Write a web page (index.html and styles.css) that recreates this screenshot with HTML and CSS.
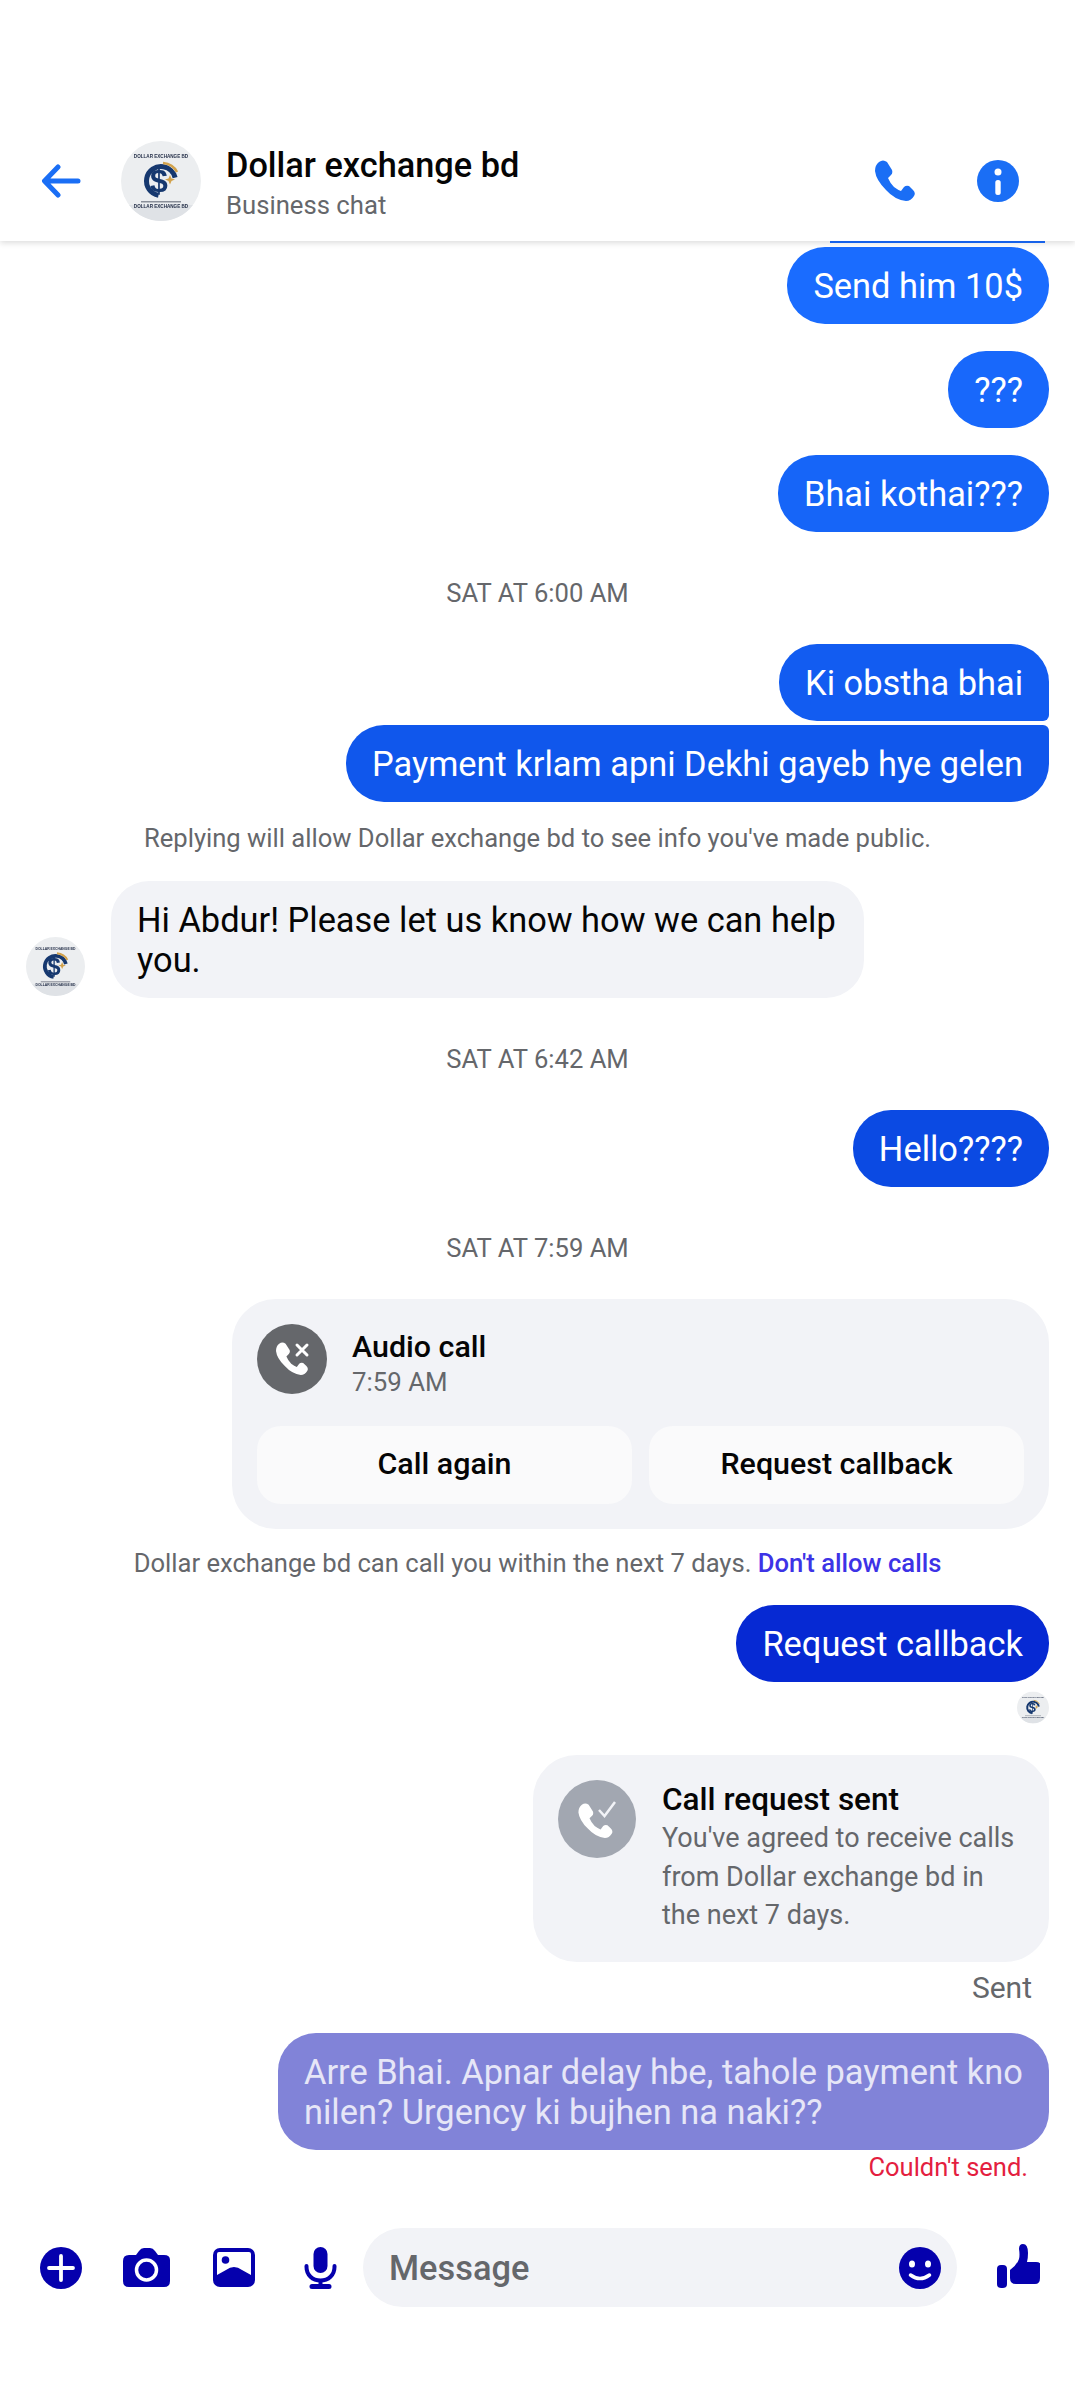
FILE: index.html
```html
<!DOCTYPE html>
<html lang="en">
<head>
  <meta charset="UTF-8" />
  <meta name="viewport" content="width=device-width, initial-scale=1.0"/>
  <title>Dollar exchange bd</title>
  <link rel="stylesheet" href="styles.css">
</head>

<body>
  <!-- shared logo and handset, used by the avatars and call icons -->
  <svg class="defs">
    <symbol id="logo" viewBox="0 0 80 80">
      <circle cx="40" cy="40" r="40" fill="#eceef0"/>
      <path d="M8 64A40 40 0 0 0 72 64Z" fill="#dfe2e6"/>
      <text x="40" y="17" class="logo-name">DOLLAR EXCHANGE BD</text>
      <circle cx="40" cy="40" r="14.500" fill="none" stroke="#16386f" stroke-width="5" stroke-dasharray="62 29" transform="rotate(100 40 40)"/>
      <path d="M42 22q10 1 14 9" fill="none" stroke="#d2a24c" stroke-width="2.500"/>
      <text x="38" y="51" class="logo-sign">$</text>
      <path d="M49 34l1.500 3.500 3.500 1-3.500 1.500-1.500 3.500-1.500-3.500-3.500-1.500 3.500-1z" fill="#d2a24c"/>
      <rect x="20" y="60" width="40" height="1.500" fill="#8a8f99"/>
      <text x="40" y="67" class="logo-name">DOLLAR EXCHANGE BD</text>
    </symbol>
    <symbol id="handset" viewBox="0 0 40 41">
      <path d="M4 2Q8-1 12 2L17 10Q18 13 16 15L13 18Q15 23 19 27Q23 30 26 31L29 27Q31 25 34 26L38 30Q41 33 39 36Q36 41 31 41Q20 40 11 30Q1 20 0 11Q0 5 4 2Z"/>
    </symbol>
  </svg>

  <header class="topbar">
    <svg class="back" viewBox="0 0 40 34"><path d="M37 17H4M17 3L3.500 17 17 31" fill="none" stroke="#1a6ef5" stroke-width="5" stroke-linecap="round" stroke-linejoin="round"/></svg>
    <svg class="avatar-lg" viewBox="0 0 80 80"><use href="#logo"/></svg>
    <div class="title">
      <div class="name">Dollar exchange bd</div>
      <div class="sub">Business chat</div>
    </div>
    <svg class="call-btn" viewBox="0 0 40 41"><use href="#handset"/></svg>
    <svg class="info-btn" viewBox="0 0 42 42"><circle cx="21" cy="21" r="21" fill="#1a6ef5"/><circle cx="21" cy="12" r="3.500" fill="#fff"/><rect x="18.300" y="20" width="5.400" height="15" rx="2.500" fill="#fff"/></svg>
  </header>

  <main class="thread">
    <div class="sliver"></div>
    <div class="bubble b1 after-sliver">Send him 10$</div>
    <div class="bubble b2 gap">???</div>
    <div class="bubble b3 gap">Bhai kothai???</div>

    <div class="stamp">SAT AT 6:00 AM</div>
    <div class="bubble b4 after-stamp first-of-run">Ki obstha bhai</div>
    <div class="bubble b5 last-of-run">Payment krlam apni Dekhi gayeb hye gelen</div>
    <div class="notice">Replying will allow Dollar exchange bd to see info you've made public.</div>

    <div class="their-row">
      <svg class="avatar-sm" viewBox="0 0 80 80"><use href="#logo"/></svg>
      <div class="bubble theirs">Hi Abdur! Please let us know how we can help you.</div>
    </div>

    <div class="stamp">SAT AT 6:42 AM</div>
    <div class="bubble b6 after-stamp">Hello????</div>

    <div class="stamp">SAT AT 7:59 AM</div>
    <div class="call-card after-stamp">
      <div class="call-head">
        <div class="call-icon">
          <svg viewBox="0 0 70 70"><use href="#handset" x="19" y="18" width="32" height="33" class="handset-white"/><path d="M40 21l10 10M50 21L40 31" stroke="#fff" stroke-width="3" stroke-linecap="round"/></svg>
        </div>
        <div>
          <div class="call-title">Audio call</div>
          <div class="call-time">7:59 AM</div>
        </div>
      </div>
      <div class="call-actions">
        <div class="call-action">Call again</div>
        <div class="call-action">Request callback</div>
      </div>
    </div>
    <div class="notice after-card">Dollar exchange bd can call you within the next 7 days. <span class="notice-link">Don't allow calls</span></div>

    <div class="bubble b7 after-notice">Request callback</div>
    <svg class="seen" viewBox="0 0 80 80"><use href="#logo"/></svg>

    <div class="request-card">
      <div class="request-icon">
        <svg viewBox="0 0 78 78"><use href="#handset" x="20" y="23" width="35" height="35" class="handset-white"/><path d="M41 30l5.500 6L57 22" fill="none" stroke="#f2f3f7" stroke-width="2.500"/></svg>
      </div>
      <div class="request-text">
        <div class="request-title">Call request sent</div>
        <div class="request-body">You've agreed to receive calls from Dollar exchange bd in the next 7 days.</div>
      </div>
    </div>
    <div class="sent">Sent</div>

    <div class="bubble failed">Arre Bhai. Apnar delay hbe, tahole payment kno nilen? Urgency ki bujhen na naki??</div>
    <div class="fail-note">Couldn't send.</div>
  </main>

  <footer class="composer">
    <svg class="ic-plus" viewBox="0 0 42 42"><circle cx="21" cy="21" r="21" fill="#0500ad"/><path d="M21 9v24M9 21h24" stroke="#fff" stroke-width="3.800" stroke-linecap="round"/></svg>
    <svg class="ic-camera" viewBox="0 0 47 39"><path d="M6 7h7l3-4q2-3 5-3h6q3 0 5 3l3 4h6q6 0 6 5v21q0 6-6 6H6q-6 0-6-6V13q0-6 6-6z" fill="#0500ad"/><circle cx="23.500" cy="22" r="10" fill="none" stroke="#fff" stroke-width="3.500"/></svg>
    <svg class="ic-photo" viewBox="0 0 42 39"><rect width="42" height="39" rx="7" fill="#0500ad"/><path d="M6 4h30q2 0 2 2v21l-9-5Q21 16 13 22l-9 5V6q0-2 2-2z" fill="#fff"/><circle cx="12.500" cy="12" r="3.800" fill="#0500ad"/></svg>
    <svg class="ic-mic" viewBox="0 0 33 42"><rect x="9.500" y="0" width="14" height="26" rx="7" fill="#0500ad"/><path d="M2.500 19v1c0 8 6 13.500 14 13.500s14-5.500 14-13.500v-1" fill="none" stroke="#0500ad" stroke-width="4" stroke-linecap="round"/><path d="M16.500 33v5" stroke="#0500ad" stroke-width="4"/><rect x="5.500" y="37" width="22" height="5" rx="2.500" fill="#0500ad"/></svg>
    <div class="input">
      <span class="placeholder">Message</span>
      <svg class="ic-smile" viewBox="0 0 42 42"><circle cx="21" cy="21" r="21" fill="#0500ad"/><ellipse cx="13" cy="17" rx="3" ry="3.500" fill="#fff"/><ellipse cx="29" cy="17" rx="3" ry="3.500" fill="#fff"/><path d="M11.500 28Q21 35 30.500 28" fill="none" stroke="#fff" stroke-width="3.500" stroke-linecap="round"/></svg>
    </div>
    <svg class="ic-like" viewBox="0 0 43 44"><rect x="0" y="21" width="10" height="23" rx="4" fill="#0500ad"/><path d="M13 26q7-5 9-11 1-4 0-10 0-5 4-5 5 0 5 9 0 5-1 9h9q5 0 5 4 0 2-1 3 3 2 1 5 1 3-1 4 0 6-5 6H19q-6 0-6-6z" fill="#0500ad"/></svg>
  </footer>
</body>
</html>
```

FILE: styles.css
```css
* {
  box-sizing: border-box;
}
body {
  margin: 0;
  height: 2393px;
  display: flex;
  flex-direction: column;
  overflow: hidden;
  background-color: #fff;
  font-family: Roboto, "Liberation Sans", sans-serif;
}
.defs {
  display: none;
}
.logo-name {
  font-family: "Liberation Sans", sans-serif;
  font-size: 4.600px;
  font-weight: bold;
  fill: #1f2a44;
  text-anchor: middle;
}
.logo-sign {
  font-family: "Liberation Sans", sans-serif;
  font-size: 32px;
  font-weight: bold;
  fill: #16386f;
  text-anchor: middle;
}
.handset-white {
  fill: #fff;
}

/* top bar */
.topbar {
  height: 241px;
  padding: 120px 56px 0 41px;
  display: flex;
  align-items: center;
  flex-shrink: 0;
  background-color: #fff;
  box-shadow: 0 2px 6px rgba(0,0,0,0.14);
  position: relative;
  z-index: 2;
}
.back {
  width: 40px;
  height: 34px;
}
.avatar-lg {
  width: 80px;
  height: 80px;
  margin-left: 40px;
  filter: blur(0.5px);
}
.title {
  flex: 1;
  margin-top: 9px;
  margin-left: 25px;
}
.name {
  font-size: 34.300px;
  font-weight: 500;
  line-height: 40px;
  color: #050505;
}
.sub {
  font-size: 25.700px;
  line-height: 40px;
  color: #65676b;
}
.call-btn {
  width: 40px;
  height: 41px;
  fill: #1a6ef5;
}
.info-btn {
  width: 42px;
  height: 42px;
  margin-left: 62px;
}

/* messages */
.thread {
  flex: 1;
  padding: 0 26px;
  display: flex;
  flex-direction: column;
  align-items: flex-end;
}
.sliver {
  width: 215px;
  height: 2px;
  margin-right: 4px;
  flex-shrink: 0;
  background-color: #1a6cff;
}
.bubble {
  padding: 18.500px 26px;
  border-radius: 38px;
  font-size: 34.400px;
  line-height: 40px;
  color: #fff;
}
.after-sliver {
  margin-top: 4px;
}
.gap {
  margin-top: 27px;
}
.after-stamp {
  margin-top: 36px;
}
.after-notice {
  margin-top: 27px;
}
.b1 { background-color: #1a6cff; }
.b2 { background-color: #1868fb; }
.b3 { background-color: #1665f8; }
.b4 { background-color: #125cf1; }
.b5 { background-color: #1057ec; }
.b6 { background-color: #0b4ae3; }
.b7 { background-color: #0629d3; }
.first-of-run {
  border-bottom-right-radius: 6px;
}
.last-of-run {
  margin-top: 4px;
  border-top-right-radius: 6px;
}
.stamp,
.notice {
  align-self: stretch;
  text-align: center;
  font-size: 25.600px;
  line-height: 30px;
  color: #65676b;
}
.stamp {
  margin-top: 46px;
}
.notice {
  margin-top: 21px;
}
.notice.after-card {
  margin-top: 19px;
}
.notice-link {
  font-weight: 500;
  color: #3d33e6;
}
.their-row {
  align-self: stretch;
  margin-top: 28px;
  display: flex;
  align-items: flex-end;
}
.avatar-sm {
  width: 59px;
  height: 59px;
  margin-right: 26px;
  margin-bottom: 2px;
  filter: blur(0.4px);
}
.theirs {
  width: 753px;
  color: #050505;
  background-color: #f2f3f7;
}

/* audio call card */
.call-card {
  width: 817px;
  padding: 25px;
  border-radius: 44px;
  background-color: #f2f3f7;
}
.call-head {
  height: 70px;
  display: flex;
  gap: 25px;
}
.call-icon {
  width: 70px;
  height: 70px;
  border-radius: 50%;
  background-color: #65676b;
}
.call-icon svg,
.request-icon svg {
  display: block;
}
.call-title {
  font-size: 30.400px;
  font-weight: 500;
  line-height: 46px;
  color: #050505;
}
.call-time {
  font-size: 25.800px;
  line-height: 24px;
  color: #65676b;
}
.call-actions {
  margin-top: 32px;
  display: flex;
  gap: 17px;
}
.call-action {
  flex: 1;
  height: 78px;
  border-radius: 24px;
  background-color: #fafafb;
  font-size: 30.400px;
  font-weight: 500;
  line-height: 76px;
  text-align: center;
  color: #050505;
}
.seen {
  width: 32px;
  height: 33px;
  margin-top: 9px;
  filter: blur(0.3px);
}

/* call request card */
.request-card {
  width: 516px;
  height: 207px;
  margin-top: 31px;
  padding: 25px;
  border-radius: 44px;
  display: flex;
  gap: 26px;
  background-color: #f2f3f7;
}
.request-icon {
  width: 78px;
  height: 78px;
  flex-shrink: 0;
  border-radius: 50%;
  background-color: #a2a7b1;
}
.request-title {
  font-size: 31.500px;
  font-weight: 500;
  line-height: 39px;
  color: #050505;
}
.request-body {
  font-size: 27px;
  line-height: 38.500px;
  color: #65676b;
}
.sent {
  margin-top: 9px;
  margin-right: 17px;
  font-size: 30px;
  line-height: 34px;
  color: #65676b;
}
.failed {
  width: 771px;
  margin-top: 28px;
  background-color: #8183d8;
  color: #e6e6f7;
}
.fail-note {
  margin-top: 2px;
  margin-right: 21px;
  font-size: 25.500px;
  line-height: 30px;
  color: #e41e3f;
}

/* bottom bar */
.composer {
  height: 165px;
  padding: 0 35px 86px 40px;
  flex-shrink: 0;
  display: flex;
  align-items: center;
}
.ic-plus {
  width: 42px;
  height: 42px;
}
.ic-camera {
  width: 47px;
  height: 39px;
  margin-left: 41px;
}
.ic-photo {
  width: 42px;
  height: 39px;
  margin-left: 43px;
}
.ic-mic {
  width: 33px;
  height: 42px;
  margin-left: 49px;
}
.input {
  width: 594px;
  height: 79px;
  margin-left: 26px;
  padding: 0 16px 0 26px;
  border-radius: 40px;
  display: flex;
  align-items: center;
  justify-content: space-between;
  background-color: #f2f3f7;
}
.placeholder {
  font-size: 34.400px;
  font-weight: 500;
  color: #65676b;
}
.ic-smile {
  width: 42px;
  height: 42px;
}
.ic-like {
  width: 43px;
  height: 44px;
  margin-left: 40px;
  margin-top: -3px;
}
```
